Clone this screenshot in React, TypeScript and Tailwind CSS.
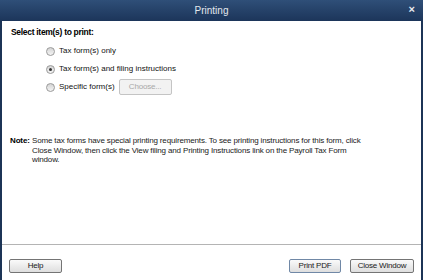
import React from "react";

const sans = "font-['Liberation_Sans',Arial,sans-serif]";

function Radio({ checked }: { checked?: boolean }) {
  return (
    <span className="flex h-[9px] w-[9px] shrink-0 items-center justify-center rounded-full border border-[#9a9a9a] bg-gradient-to-b from-[#d4d4d4] to-[#f4f4f4]">
      {checked && <span className="h-[3px] w-[3px] rounded-full bg-[#333]" />}
    </span>
  );
}

function Option({ label, checked, children }: { label: string; checked?: boolean; children?: React.ReactNode }) {
  return (
    <div className="flex h-[18px] items-center pl-[44px]">
      <Radio checked={checked} />
      <span className="ml-[4px] whitespace-nowrap text-[8px] leading-none text-[#111]">{label}</span>
      {children}
    </div>
  );
}

function Button({ label, wide, primary }: { label: string; wide: string; primary?: boolean }) {
  return (
    <button
      className={
        "flex h-[14px] items-center justify-center rounded-[2px] border bg-gradient-to-b from-[#fafafa] to-[#dedede] text-[8px] leading-none tracking-[-0.2px] text-[#1a1a1a] " +
        (primary ? "border-[#7088a6] " : "border-[#747474] ") +
        wide
      }
    >
      {label}
    </button>
  );
}

export default function App() {
  return (
    <div className={"flex h-[280px] w-[423px] flex-col overflow-hidden bg-white " + sans}>
      {/* title bar */}
      <div className="relative flex h-[21px] shrink-0 items-center justify-center bg-gradient-to-b from-[#2f4f78] to-[#1c355a]">
        <span className="text-[10px] leading-none text-[#e4e8ee]">Printing</span>
        <span className="absolute right-[8px] top-[4px] text-[11px] font-bold leading-none text-[#e8ecf0]">×</span>
      </div>

      <div className="flex flex-1 flex-col border-x-2 border-[#1c3456]">
        <div className="ml-[9px] mt-[5px] h-[12px] text-[8.5px] font-bold leading-[12px] tracking-[-0.3px] text-black">
          Select item(s) to print:
        </div>

        <div className="mt-[4px] flex flex-col">
          <Option label="Tax form(s) only" />
          <Option label="Tax form(s) and filing instructions" checked />
          <Option label="Specific form(s)">
            <button className="ml-[4px] flex h-[16px] w-[53px] items-center justify-center rounded-[2px] border border-[#c4c4c4] bg-[#f2f2f2] text-[8px] leading-none tracking-[-0.2px] text-[#a8a8a8]">
              Choose...
            </button>
          </Option>
        </div>

        <div className="ml-[8px] mt-[40px] flex text-[8px] leading-[9.5px] tracking-[-0.15px] text-[#1a1a1a]">
          <span className="w-[22px] shrink-0 font-bold text-black">Note:</span>
          <p className="w-[338px]">
            Some tax forms have special printing requirements. To see printing instructions for this form, click Close
            Window, then click the View filing and Printing Instructions link on the Payroll Tax Form window.
          </p>
        </div>

        <div className="flex-1" />

        <div className="flex h-[36px] shrink-0 border-t border-[#b4b4b4] px-[7px] pt-[14px]">
          <Button label="Help" wide="w-[53px]" />
          <div className="flex-1" />
          <Button label="Print PDF" wide="w-[52px]" primary />
          <div className="w-[9px]" />
          <Button label="Close Window" wide="w-[64px]" />
        </div>
      </div>
    </div>
  );
}
